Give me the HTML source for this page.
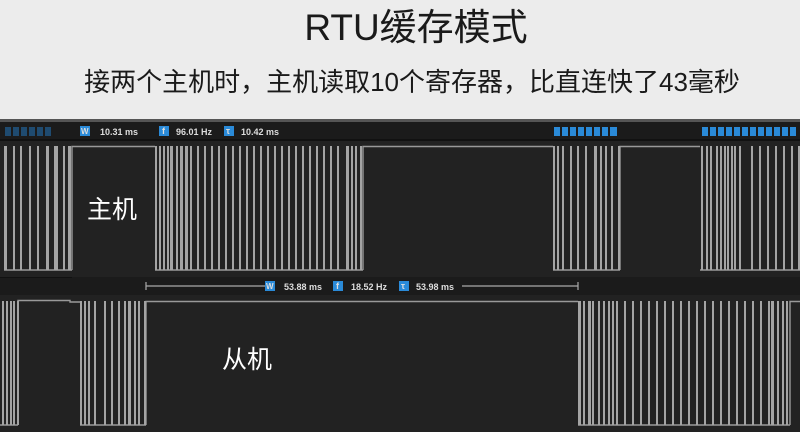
<!DOCTYPE html>
<html><head><meta charset="utf-8"><style>
body{margin:0;width:800px;height:432px;overflow:hidden;background:#ececec;font-family:"Liberation Sans","Noto Sans CJK SC",sans-serif;position:relative}
.t{position:absolute;left:0;width:800px;text-align:center;color:#1a1a1a}
</style></head><body>
<div class="t" style="top:-3px;left:16px;font-size:37px;">RTU缓存模式</div>
<div class="t" style="top:62px;font-size:26px;left:12px;">接两个主机时，主机读取10个寄存器，比直连快了43毫秒</div>
<svg width="800" height="432" style="position:absolute;left:0;top:0" xmlns="http://www.w3.org/2000/svg" font-family="Liberation Sans, sans-serif">
<rect x="0" y="119" width="800" height="313" fill="#222"/>
<rect x="0" y="119" width="800" height="3" fill="#555"/>
<rect x="0" y="122" width="800" height="17" fill="#1b1b1b"/>
<rect x="0" y="139" width="800" height="2" fill="#111"/>
<g fill="#1f4b70">
<rect x="5" y="127" width="6" height="9"/><rect x="13" y="127" width="6" height="9"/><rect x="21" y="127" width="6" height="9"/><rect x="29" y="127" width="6" height="9"/><rect x="37" y="127" width="6" height="9"/><rect x="45" y="127" width="6" height="9"/>
</g>
<g fill="#2a8ad8">
<rect x="554" y="127" width="6" height="9"/><rect x="562" y="127" width="6" height="9"/><rect x="570" y="127" width="6" height="9"/><rect x="578" y="127" width="6" height="9"/><rect x="586" y="127" width="6" height="9"/><rect x="594" y="127" width="6" height="9"/><rect x="602" y="127" width="6" height="9"/><rect x="610" y="127" width="7" height="9"/>
<rect x="702" y="127" width="6" height="9"/><rect x="710" y="127" width="6" height="9"/><rect x="718" y="127" width="6" height="9"/><rect x="726" y="127" width="6" height="9"/><rect x="734" y="127" width="6" height="9"/><rect x="742" y="127" width="6" height="9"/><rect x="750" y="127" width="6" height="9"/><rect x="758" y="127" width="6" height="9"/><rect x="766" y="127" width="6" height="9"/><rect x="774" y="127" width="6" height="9"/><rect x="782" y="127" width="6" height="9"/><rect x="790" y="127" width="6" height="9"/>
</g>
<g font-size="9" fill="#ddd" font-weight="bold">
<rect x="80" y="126" width="10" height="10" fill="#2a8ad8"/><text x="81" y="134" font-size="8">W</text>
<text x="100" y="135">10.31 ms</text>
<rect x="159" y="126" width="10" height="10" fill="#2a8ad8"/><text x="162" y="134">f</text>
<text x="176" y="135">96.01 Hz</text>
<rect x="224" y="126" width="10" height="10" fill="#2a8ad8"/><text x="226" y="134">τ</text>
<text x="241" y="135">10.42 ms</text>
</g>
<g fill="none" stroke="#999" stroke-width="1.4">
<path d="M72 270V146.5H155M363 270V146.5H553M620 270V146.5H700M4 270H72M155 270H363M553 270H620M700 270H800"/>
</g>
<g fill="#a4a4a4">
<rect x="4" y="146" width="3" height="124"/><rect x="13" y="146" width="2" height="124"/><rect x="20" y="146" width="2" height="124"/><rect x="29" y="146" width="2" height="124"/><rect x="37" y="146" width="2" height="124"/><rect x="46" y="146" width="3" height="124"/><rect x="54" y="146" width="4" height="124"/><rect x="63" y="146" width="2" height="124"/><rect x="68" y="146" width="3" height="124"/>
<rect x="155" y="146" width="2" height="124"/><rect x="159" y="146" width="2" height="124"/><rect x="163" y="146" width="2" height="124"/><rect x="167" y="146" width="2" height="124"/><rect x="170" y="146" width="3" height="124"/><rect x="176" y="146" width="2" height="124"/><rect x="180" y="146" width="3" height="124"/><rect x="185" y="146" width="3" height="124"/><rect x="190" y="146" width="2" height="124"/><rect x="197" y="146" width="2" height="124"/><rect x="204" y="146" width="2" height="124"/><rect x="211" y="146" width="2" height="124"/><rect x="218" y="146" width="2" height="124"/><rect x="225" y="146" width="2" height="124"/><rect x="232" y="146" width="2" height="124"/><rect x="239" y="146" width="2" height="124"/><rect x="246" y="146" width="2" height="124"/><rect x="253" y="146" width="2" height="124"/><rect x="260" y="146" width="2" height="124"/><rect x="267" y="146" width="2" height="124"/><rect x="274" y="146" width="2" height="124"/><rect x="281" y="146" width="2" height="124"/><rect x="288" y="146" width="2" height="124"/><rect x="295" y="146" width="2" height="124"/><rect x="302" y="146" width="2" height="124"/><rect x="309" y="146" width="2" height="124"/><rect x="316" y="146" width="2" height="124"/><rect x="323" y="146" width="2" height="124"/><rect x="330" y="146" width="2" height="124"/><rect x="337" y="146" width="2" height="124"/><rect x="346" y="146" width="3" height="124"/><rect x="351" y="146" width="2" height="124"/><rect x="355" y="146" width="2" height="124"/><rect x="360" y="146" width="2" height="124"/>
<rect x="553" y="146" width="2" height="124"/><rect x="557" y="146" width="2" height="124"/><rect x="562" y="146" width="2" height="124"/><rect x="570" y="146" width="2" height="124"/><rect x="577" y="146" width="2" height="124"/><rect x="585" y="146" width="2" height="124"/><rect x="594" y="146" width="3" height="124"/><rect x="600" y="146" width="2" height="124"/><rect x="605" y="146" width="2" height="124"/><rect x="611" y="146" width="2" height="124"/><rect x="618" y="146" width="2" height="124"/>
<rect x="701" y="146" width="2" height="124"/><rect x="706" y="146" width="2" height="124"/><rect x="710" y="146" width="2" height="124"/><rect x="716" y="146" width="2" height="124"/><rect x="720" y="146" width="2" height="124"/><rect x="724" y="146" width="2" height="124"/><rect x="727" y="146" width="2" height="124"/><rect x="731" y="146" width="2" height="124"/><rect x="734" y="146" width="2" height="124"/><rect x="739" y="146" width="2" height="124"/><rect x="751" y="146" width="2" height="124"/><rect x="759" y="146" width="2" height="124"/><rect x="767" y="146" width="2" height="124"/><rect x="775" y="146" width="2" height="124"/><rect x="783" y="146" width="2" height="124"/><rect x="791" y="146" width="2" height="124"/><rect x="798" y="146" width="2" height="124"/>
</g>
<text x="87" y="218" font-size="25" fill="#fff" font-family="Liberation Sans, Noto Sans CJK SC, sans-serif">主机</text>
<rect x="0" y="277" width="800" height="18" fill="#1b1b1b"/>
<rect x="0" y="277" width="72" height="1" fill="#111"/>
<path d="M146 286H265M462 286H578M146 282V290M578 282V290" stroke="#aaa" stroke-width="1.2"/>
<g font-size="9" fill="#ddd" font-weight="bold">
<rect x="265" y="281" width="10" height="10" fill="#2a8ad8"/><text x="266" y="289" font-size="8">W</text>
<text x="284" y="290">53.88 ms</text>
<rect x="333" y="281" width="10" height="10" fill="#2a8ad8"/><text x="336" y="289">f</text>
<text x="351" y="290">18.52 Hz</text>
<rect x="399" y="281" width="10" height="10" fill="#2a8ad8"/><text x="401" y="289">τ</text>
<text x="416" y="290">53.98 ms</text>
</g>
<g fill="none" stroke="#999" stroke-width="1.4">
<path d="M18 425V300.5H70V302H80M146 425V301.5H578M790 425V301.5H800M0 425H18M80 425H146M578 425H790"/>
</g>
<g fill="#a4a4a4">
<rect x="2" y="301" width="2" height="124"/><rect x="6" y="301" width="2" height="124"/><rect x="10" y="301" width="2" height="124"/><rect x="13" y="301" width="2" height="124"/><rect x="17" y="301" width="2" height="124"/>
<rect x="80" y="301" width="2" height="124"/><rect x="84" y="301" width="2" height="124"/><rect x="88" y="301" width="2" height="124"/><rect x="94" y="301" width="2" height="124"/><rect x="104" y="301" width="2" height="124"/><rect x="111" y="301" width="2" height="124"/><rect x="118" y="301" width="2" height="124"/><rect x="124" y="301" width="2" height="124"/><rect x="128" y="301" width="3" height="124"/><rect x="134" y="301" width="2" height="124"/><rect x="138" y="301" width="2" height="124"/><rect x="144" y="301" width="2" height="124"/>
<rect x="578" y="301" width="3" height="124"/><rect x="583" y="301" width="2" height="124"/><rect x="588" y="301" width="3" height="124"/><rect x="592" y="301" width="2" height="124"/><rect x="598" y="301" width="2" height="124"/><rect x="603" y="301" width="2" height="124"/><rect x="608" y="301" width="2" height="124"/><rect x="612" y="301" width="2" height="124"/><rect x="616" y="301" width="2" height="124"/><rect x="624" y="301" width="2" height="124"/><rect x="632" y="301" width="2" height="124"/><rect x="640" y="301" width="2" height="124"/><rect x="648" y="301" width="2" height="124"/><rect x="656" y="301" width="2" height="124"/><rect x="664" y="301" width="2" height="124"/><rect x="672" y="301" width="2" height="124"/><rect x="680" y="301" width="2" height="124"/><rect x="688" y="301" width="2" height="124"/><rect x="696" y="301" width="2" height="124"/><rect x="704" y="301" width="2" height="124"/><rect x="712" y="301" width="2" height="124"/><rect x="720" y="301" width="2" height="124"/><rect x="728" y="301" width="2" height="124"/><rect x="736" y="301" width="2" height="124"/><rect x="744" y="301" width="2" height="124"/><rect x="752" y="301" width="2" height="124"/><rect x="760" y="301" width="2" height="124"/><rect x="768" y="301" width="2" height="124"/><rect x="771" y="301" width="3" height="124"/><rect x="777" y="301" width="2" height="124"/><rect x="782" y="301" width="2" height="124"/><rect x="786" y="301" width="2" height="124"/>
</g>
<text x="222" y="368" font-size="25" fill="#fff" font-family="Liberation Sans, Noto Sans CJK SC, sans-serif">从机</text>
</svg>
</body></html>
